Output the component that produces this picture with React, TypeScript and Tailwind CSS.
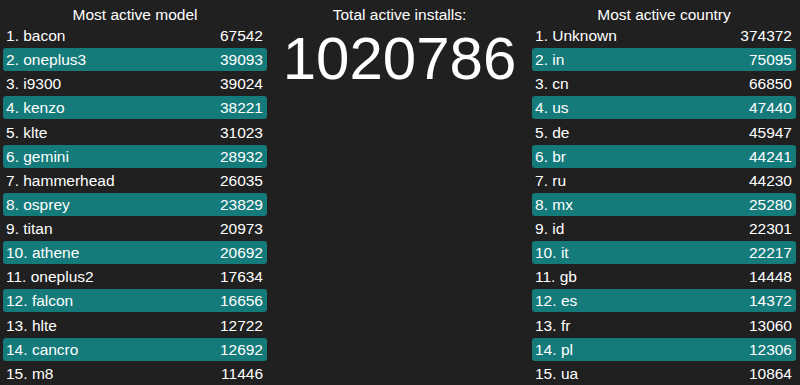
import React from 'react'

type Entry = [string, number]

const models: Entry[] = [
  ['bacon', 67542],
  ['oneplus3', 39093],
  ['i9300', 39024],
  ['kenzo', 38221],
  ['klte', 31023],
  ['gemini', 28932],
  ['hammerhead', 26035],
  ['osprey', 23829],
  ['titan', 20973],
  ['athene', 20692],
  ['oneplus2', 17634],
  ['falcon', 16656],
  ['hlte', 12722],
  ['cancro', 12692],
  ['m8', 11446],
]

const countries: Entry[] = [
  ['Unknown', 374372],
  ['in', 75095],
  ['cn', 66850],
  ['us', 47440],
  ['de', 45947],
  ['br', 44241],
  ['ru', 44230],
  ['mx', 25280],
  ['id', 22301],
  ['it', 22217],
  ['gb', 14448],
  ['es', 14372],
  ['fr', 13060],
  ['pl', 12306],
  ['ua', 10864],
]

const RankList = ({ title, items }: { title: string; items: Entry[] }) => (
  <div className="flex w-[264px] shrink-0 flex-col">
    <h2 className="h-[19px] text-center text-[15.5px] leading-[19px] font-normal">{title}</h2>
    <ol className="flex flex-col gap-[1.14px]">
      {items.map(([name, count], idx) => (
        <li
          key={name}
          className={
            idx % 2 === 1
              ? 'flex h-[23px] items-center justify-between rounded-[3px] bg-[#157a7a] pl-[3px] pr-[4px] text-[15.5px] leading-[23px]'
              : 'flex h-[23px] items-center justify-between rounded-[3px] pl-[3px] pr-[4px] text-[15.5px] leading-[23px]'
          }
        >
          <span>
            {idx + 1}. {name}
          </span>
          <span>{count}</span>
        </li>
      ))}
    </ol>
  </div>
)

export default function App() {
  return (
    <div className="h-screen overflow-hidden bg-[#202020] text-white font-['Liberation_Sans',Arial,sans-serif]">
      <div className="flex pt-[5px] pl-[3px] pr-[4px]">
        <RankList title="Most active model" items={models} />
        <div className="flex flex-1 flex-col items-center">
          <h2 className="h-[19px] text-[15.5px] leading-[19px] font-normal">Total active installs:</h2>
          <div className="mt-[3px] text-[60px] leading-[64px]">1020786</div>
        </div>
        <RankList title="Most active country" items={countries} />
      </div>
    </div>
  )
}
